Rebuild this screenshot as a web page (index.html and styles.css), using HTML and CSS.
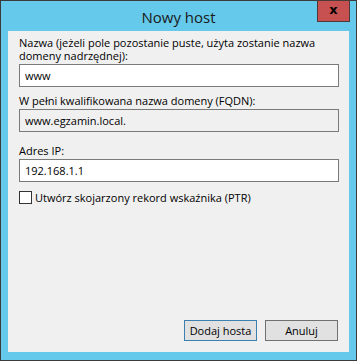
FILE: index.html
```html
<!DOCTYPE html>
<html lang="pl">
<head>
  <meta charset="UTF-8">
  <title>Nowy host</title>
  <link rel="stylesheet" href="styles.css">
</head>
<body>

  <div class="window">
    <div class="titlebar">
      <span class="title">Nowy host</span>
      <div class="close">x</div>
    </div>

    <div class="client">
      <label class="label" for="name">Nazwa (jeżeli pole pozostanie puste, użyta zostanie nazwa domeny nadrzędnej):</label>
      <input class="field" id="name" type="text" value="www">

      <label class="label" for="fqdn">W pełni kwalifikowana nazwa domeny (FQDN):</label>
      <input class="field readonly" id="fqdn" type="text" value="www.egzamin.local." readonly>

      <label class="label" for="ip">Adres IP:</label>
      <input class="field ip" id="ip" type="text" value="192.168.1.1">

      <div class="check-row">
        <span class="checkbox"></span>
        <span>Utwórz skojarzony rekord wskaźnika (PTR)</span>
      </div>

      <div class="buttons">
        <button class="btn default">Dodaj hosta</button>
        <button class="btn">Anuluj</button>
      </div>
    </div>
  </div>

</body>
</html>
```

FILE: styles.css
```css
body {
  margin: 0;
  font-family: 'Open Sans', 'Noto Sans', sans-serif;
  font-size: 11px;
  color: #000;
}

.window {
  position: relative;
  width: 357px;
  height: 361px;
  box-sizing: border-box;
  border: 1px solid #3b3b3b;
  background-color: #64c9ea;
  padding: 0 7px 8px;
  display: flex;
  flex-direction: column;
}

.titlebar {
  height: 30px;
  display: flex;
  align-items: center;
  justify-content: center;
}

.title {
  font-size: 15px;
  color: #1a1a1a;
  margin-top: 1px;
}

.close {
  position: absolute;
  top: -1px;
  right: 6px;
  width: 33px;
  height: 22px;
  box-sizing: border-box;
  border: 1px solid #4a3a3a;
  background-color: #c75050;
  color: #000;
  font-family: 'DejaVu Sans', sans-serif;
  font-weight: bold;
  font-size: 13px;
  line-height: 17px;
  text-align: center;
}

.client {
  flex: 1;
  background-color: #f0f0f0;
  padding: 5px 10px 0 11px;
  display: flex;
  flex-direction: column;
}

.label {
  display: block;
  line-height: 13px;
}

.field {
  height: 23px;
  box-sizing: border-box;
  margin: 2px 0 7px;
  padding: 0 5px;
  border: 1px solid #7a7a7a;
  background-color: #fff;
  font-family: inherit;
  font-size: 11px;
  color: #000;
  outline: none;
}

.field.readonly {
  background-color: #f0f0f0;
  margin-bottom: 12px;
}

.field.ip {
  margin-bottom: 9px;
}

.check-row {
  display: flex;
  align-items: center;
  gap: 3px;
  line-height: 13px;
}

.checkbox {
  width: 13px;
  height: 13px;
  box-sizing: border-box;
  border: 1px solid #333;
  background-color: #fff;
}

.buttons {
  margin-top: auto;
  margin-bottom: 11px;
  display: flex;
  justify-content: flex-end;
  gap: 8px;
  padding-right: 1px;
}

.btn {
  width: 73px;
  height: 21px;
  box-sizing: border-box;
  padding: 0;
  border: 1px solid #707070;
  background-color: #e1e1e1;
  font-family: inherit;
  font-size: 11px;
  color: #000;
}

.btn.default {
  border-color: #3c7fb1;
}
```
